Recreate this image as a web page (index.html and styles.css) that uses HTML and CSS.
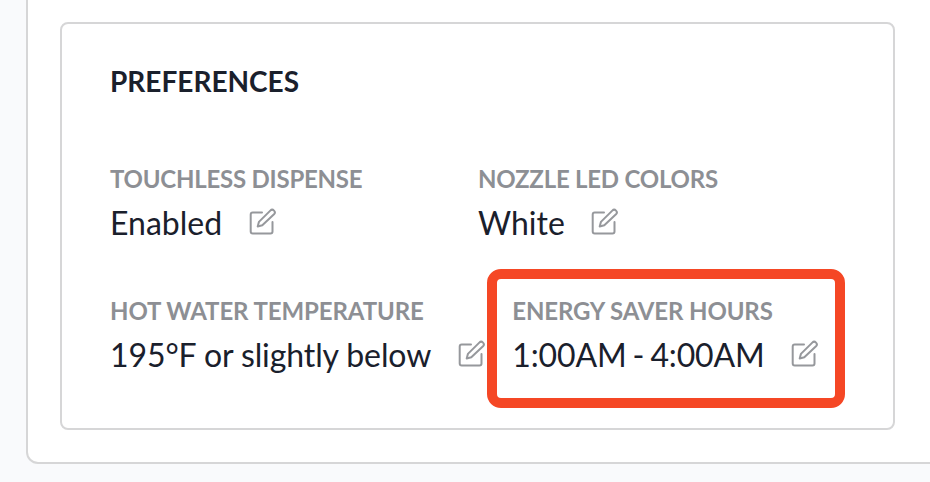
FILE: index.html
```html
<!DOCTYPE html>
<html lang="en">
<head>
    <meta charset="UTF-8">
    <meta name="viewport" content="width=device-width, initial-scale=1.0">
    <title>Preferences</title>
    <link rel="stylesheet" href="styles.css">
</head>
<body>
    <svg class="sprite">
        <symbol id="edit" viewBox="0 0 28 28">
            <path d="M13 4.500H3.700a2 2 0 0 0-2 2V23.500a2 2 0 0 0 2 2H21.500a2 2 0 0 0 2-2V14"/>
            <path d="M21.300 2.600a2.500 2.500 0 0 1 3.700 3.700L13.300 17.300 8.700 18.500 9.900 13.900z"/>
        </symbol>
    </svg>

    <main class="panel">
        <section class="card">
            <h2>PREFERENCES</h2>

            <div class="row">
                <div class="item touchless">
                    <div class="label">TOUCHLESS DISPENSE</div>
                    <div class="value"><span>Enabled</span><svg class="icon"><use href="#edit"/></svg></div>
                </div>
                <div class="item">
                    <div class="label">NOZZLE LED COLORS</div>
                    <div class="value"><span>White</span><svg class="icon"><use href="#edit"/></svg></div>
                </div>
            </div>

            <div class="row">
                <div class="item temperature">
                    <div class="label">HOT WATER TEMPERATURE</div>
                    <div class="value"><span>195°F or slightly below</span><svg class="icon"><use href="#edit"/></svg></div>
                </div>
                <div class="item highlight">
                    <div class="label">ENERGY SAVER HOURS</div>
                    <div class="value"><span>1:00AM - 4:00AM</span><svg class="icon"><use href="#edit"/></svg></div>
                </div>
            </div>
        </section>
    </main>
</body>
</html>
```
FILE: styles.css
```css
* {
    box-sizing: border-box;
}

body {
    margin: 0;
    height: 482px;
    overflow: hidden;
    padding-left: 26px;
    background-color: #f9fafc;
    font-family: Lato, sans-serif;
    color: #1a202c;
}

.sprite {
    display: none;
}

.panel {
    width: 940px;
    height: 464px;
    padding: 22px 0 0 32px;
    background-color: #fff;
    border: 2px solid #d6d6d7;
    border-top: none;
    border-radius: 0 0 0 12px;
}

.card {
    width: 835px;
    height: 408px;
    padding: 37px 48px 0;
    border: 2px solid #d6d6d7;
    border-radius: 8px;
}

h2 {
    margin: 0 0 59px;
    font-size: 28px;
    line-height: 40px;
    font-weight: 700;
}

.row {
    display: flex;
    height: 132px;
}

.item {
    position: relative;
    flex-shrink: 0;
    min-width: 368px;
    padding-top: 4px;
    white-space: nowrap;
}

.label {
    font-size: 24px;
    line-height: 30px;
    font-weight: 700;
    letter-spacing: -0.23px;
    color: #8d8f94;
}

.value {
    display: flex;
    align-items: center;
    margin-top: 7px;
    font-size: 32px;
    line-height: 44px;
}

.icon {
    flex-shrink: 0;
    width: 28px;
    height: 28px;
    margin: -3px 0 0 26px;
    fill: none;
    stroke: #96989c;
    stroke-width: 2;
    stroke-linejoin: round;
    stroke-linecap: round;
}

.touchless .icon,
.temperature .icon {
    margin-left: 27px;
}

.temperature .label,
.temperature .value {
    letter-spacing: -0.1px;
}

.highlight {
    min-width: 0;
    margin-left: 26px;
}

.highlight .label {
    letter-spacing: -0.13px;
}

.highlight .value {
    letter-spacing: -0.13px;
    word-spacing: -2px;
}

/* red frame around the energy saver setting */
.highlight::after {
    content: "";
    position: absolute;
    box-sizing: border-box;
    top: -23px;
    left: -25px;
    width: 358px;
    height: 139px;
    border: 10px solid #f54725;
    border-radius: 14px;
}
```
